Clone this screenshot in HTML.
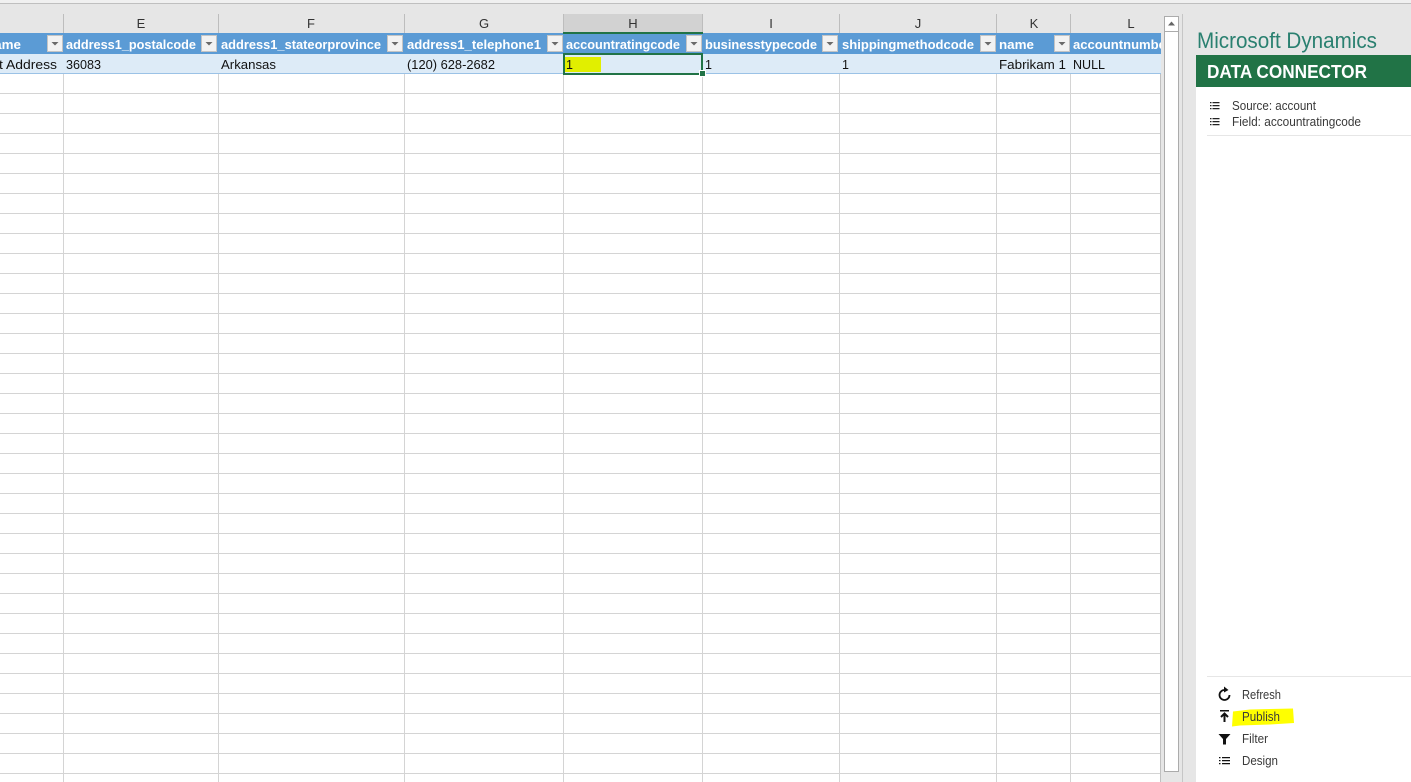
<!DOCTYPE html>
<html><head><meta charset="utf-8"><style>
html,body{margin:0;padding:0;background:#fff;overflow:hidden}
svg{display:block}
text{font-family:"Liberation Sans",sans-serif}
.c{font-size:13px;fill:#333;text-anchor:middle}
.h{font-size:13px;font-weight:bold;fill:#fff}
.d{font-size:12.5px;fill:#111}
.p{font-size:12.5px;fill:#3a3a3a}
</style></head><body>
<svg width="1411" height="782" viewBox="0 0 1411 782" xmlns="http://www.w3.org/2000/svg">
<defs><clipPath id="cl"><rect x="0" y="0" width="1161" height="782"/></clipPath></defs>
<rect width="1411" height="782" fill="#fff"/>
<rect width="1411" height="3" fill="#f0f0f0"/>
<rect y="3" width="1411" height="1" fill="#bfbfbf"/>
<rect y="4" width="1411" height="29" fill="#e6e6e6"/>
<rect x="1161" y="4" width="250" height="51" fill="#e6e6e6"/>
<rect x="1161" y="4" width="35" height="778" fill="#e6e6e6"/>
<rect x="1182" y="14" width="1" height="768" fill="#c6c6c6"/>

<!-- H header -->
<rect x="563" y="14" width="140" height="19" fill="#d2d2d2"/>
<!-- header dividers -->
<g fill="#bdbdbd">
<rect x="63" y="14" width="1" height="19"/><rect x="218" y="14" width="1" height="19"/><rect x="404" y="14" width="1" height="19"/><rect x="563" y="14" width="1" height="19"/><rect x="702" y="14" width="1" height="19"/><rect x="839" y="14" width="1" height="19"/><rect x="996" y="14" width="1" height="19"/><rect x="1070" y="14" width="1" height="19"/>
</g>
<text class="c" x="141" y="28">E</text><text class="c" x="311" y="28" fill="#400">F</text><text class="c" x="484" y="28">G</text><text class="c" x="633" y="28">H</text><text class="c" x="771" y="28">I</text><text class="c" x="918" y="28">J</text><text class="c" x="1034" y="28">K</text><text class="c" x="1131" y="28">L</text>

<!-- grid -->
<g fill="#d4d4d4">
<rect x="63" y="54" width="1" height="728"/><rect x="218" y="54" width="1" height="728"/><rect x="404" y="54" width="1" height="728"/><rect x="563" y="54" width="1" height="728"/><rect x="702" y="54" width="1" height="728"/><rect x="839" y="54" width="1" height="728"/><rect x="996" y="54" width="1" height="728"/><rect x="1070" y="54" width="1" height="728"/>
<rect y="93" width="1161" height="1"/><rect y="113" width="1161" height="1"/><rect y="133" width="1161" height="1"/><rect y="153" width="1161" height="1"/><rect y="173" width="1161" height="1"/><rect y="193" width="1161" height="1"/><rect y="213" width="1161" height="1"/><rect y="233" width="1161" height="1"/><rect y="253" width="1161" height="1"/><rect y="273" width="1161" height="1"/><rect y="293" width="1161" height="1"/><rect y="313" width="1161" height="1"/><rect y="333" width="1161" height="1"/><rect y="353" width="1161" height="1"/><rect y="373" width="1161" height="1"/><rect y="393" width="1161" height="1"/><rect y="413" width="1161" height="1"/><rect y="433" width="1161" height="1"/><rect y="453" width="1161" height="1"/><rect y="473" width="1161" height="1"/><rect y="493" width="1161" height="1"/><rect y="513" width="1161" height="1"/><rect y="533" width="1161" height="1"/><rect y="553" width="1161" height="1"/><rect y="573" width="1161" height="1"/><rect y="593" width="1161" height="1"/><rect y="613" width="1161" height="1"/><rect y="633" width="1161" height="1"/><rect y="653" width="1161" height="1"/><rect y="673" width="1161" height="1"/><rect y="693" width="1161" height="1"/><rect y="713" width="1161" height="1"/><rect y="733" width="1161" height="1"/><rect y="753" width="1161" height="1"/><rect y="773" width="1161" height="1"/>
<rect x="1160" y="74" width="1" height="708" fill="#c0c0c0"/>
</g>

<!-- table header + row -->
<rect y="33" width="1161" height="21" fill="#5b9bd5"/>
<rect y="54" width="1161" height="19" fill="#ddebf7"/>
<rect y="73" width="1161" height="1" fill="#9bc2e6"/>

<!-- highlighted cell fill -->
<rect x="565" y="57" width="36" height="15" fill="#e1ef00"/>

<g clip-path="url(#cl)">
<text class="h" x="-14" y="49" textLength="35" lengthAdjust="spacingAndGlyphs">name</text>
<text class="h" x="66" y="49" textLength="130" lengthAdjust="spacingAndGlyphs">address1_postalcode</text>
<text class="h" x="221" y="49" textLength="160" lengthAdjust="spacingAndGlyphs">address1_stateorprovince</text>
<text class="h" x="407" y="49" textLength="134" lengthAdjust="spacingAndGlyphs">address1_telephone1</text>
<text class="h" x="566" y="49" textLength="114" lengthAdjust="spacingAndGlyphs">accountratingcode</text>
<text class="h" x="705" y="49" textLength="112" lengthAdjust="spacingAndGlyphs">businesstypecode</text>
<text class="h" x="842" y="49" textLength="132" lengthAdjust="spacingAndGlyphs">shippingmethodcode</text>
<text class="h" x="999" y="49" textLength="35" lengthAdjust="spacingAndGlyphs">name</text>
<text class="h" x="1073" y="49" textLength="98" lengthAdjust="spacingAndGlyphs">accountnumber</text>

<text class="d" x="-1" y="69" textLength="58" lengthAdjust="spacingAndGlyphs">t Address</text>
<text class="d" x="66" y="69" textLength="35" lengthAdjust="spacingAndGlyphs">36083</text>
<text class="d" x="221" y="69" textLength="55" lengthAdjust="spacingAndGlyphs">Arkansas</text>
<text class="d" x="407" y="69" textLength="88" lengthAdjust="spacingAndGlyphs">(120) 628-2682</text>
<text class="d" x="566" y="69">1</text>
<text class="d" x="705" y="69">1</text>
<text class="d" x="842" y="69">1</text>
<text class="d" x="999" y="69" textLength="67" lengthAdjust="spacingAndGlyphs">Fabrikam 1</text>
<text class="d" x="1073" y="69" textLength="32" lengthAdjust="spacingAndGlyphs">NULL</text>
</g>

<!-- filter buttons -->
<g fill="#f2f2f2" stroke="#c4c4c4">
<rect x="47.5" y="35.500" width="15" height="16"/><rect x="201.500" y="35.500" width="15" height="16"/><rect x="387.500" y="35.500" width="15" height="16"/><rect x="547.500" y="35.500" width="15" height="16"/><rect x="686.500" y="35.500" width="15" height="16"/><rect x="822.500" y="35.500" width="15" height="16"/><rect x="980.500" y="35.500" width="15" height="16"/><rect x="1054.500" y="35.500" width="15" height="16"/>
</g>
<g fill="#6a6a6a">
<path d="M51.500 42h7l-3.500 3.500z"/><path d="M205.500 42h7l-3.500 3.500z"/><path d="M391.500 42h7l-3.500 3.500z"/><path d="M551.500 42h7l-3.500 3.500z"/><path d="M690.500 42h7l-3.500 3.500z"/><path d="M826.500 42h7l-3.500 3.500z"/><path d="M984.500 42h7l-3.500 3.500z"/><path d="M1058.500 42h7l-3.500 3.500z"/>
</g>

<!-- selection -->
<rect x="563" y="32" width="140" height="2" fill="#217346"/>
<rect x="564" y="54" width="138" height="20" fill="none" stroke="#217346" stroke-width="2"/>
<rect x="699" y="70" width="7" height="7" fill="#fff"/>
<rect x="700" y="71" width="5" height="5" fill="#217346"/>

<!-- scrollbar -->
<rect x="1164.500" y="16.500" width="14" height="755" fill="#fff" stroke="#ababab"/>
<rect x="1164" y="31" width="15" height="1" fill="#ababab"/>
<path d="M1168 25.500h7l-3.500-4z" fill="#666"/>

<!-- pane -->
<rect x="1196" y="55" width="215" height="727" fill="#fff"/>
<text x="1197" y="48" font-size="22" fill="#2a8070" textLength="180" lengthAdjust="spacingAndGlyphs">Microsoft Dynamics</text>
<rect x="1196" y="55" width="215" height="32" fill="#217346"/>
<text x="1207" y="78" font-size="18" font-weight="bold" fill="#fff" textLength="160" lengthAdjust="spacingAndGlyphs">DATA CONNECTOR</text>

<g fill="#222">
<path d="M1210 102h1.500v1.200h-1.500zM1210 105h1.500v1.200h-1.500zM1210 108h1.500v1.200h-1.500zM1212.500 102h7v1.200h-7zM1212.500 105h7v1.200h-7zM1212.500 108h7v1.200h-7z"/>
<path d="M1210 118h1.500v1.200h-1.500zM1210 121h1.500v1.200h-1.500zM1210 124h1.500v1.200h-1.500zM1212.500 118h7v1.200h-7zM1212.500 121h7v1.200h-7zM1212.500 124h7v1.200h-7z"/>
</g>
<text class="p" x="1232" y="110" textLength="84" lengthAdjust="spacingAndGlyphs">Source: account</text>
<text class="p" x="1232" y="126" textLength="129" lengthAdjust="spacingAndGlyphs">Field: accountratingcode</text>
<rect x="1207" y="135" width="204" height="1" fill="#e6e6e6"/>
<rect x="1207" y="676" width="204" height="1" fill="#e6e6e6"/>

<!-- highlighter -->
<path d="M1233 711.500L1250 709.500L1270 709L1293 708.500L1294 723L1270 724.500L1240 725.500L1232 726.500z" fill="#ffff00"/>

<!-- action icons -->
<path d="M1224.500 690A5 5 0 1 0 1229.500 695" fill="none" stroke="#111" stroke-width="1.800"/>
<path d="M1224 686.500l4.500 3.500-4.500 2.500z" fill="#111"/>
<path d="M1220 710h9v1.500h-9z" fill="#111"/>
<path d="M1224.500 722v-8.500M1221 717l3.500-3.500 3.500 3.500" fill="none" stroke="#111" stroke-width="2"/>
<path d="M1218.500 734h12l-4.500 5v5.500h-3V739z" fill="#111"/>
<g fill="#111">
<path d="M1219 757h1.500v1.300H1219zM1219 760h1.500v1.300H1219zM1219 763h1.500v1.300H1219zM1222 757h8v1.300h-8zM1222 760h8v1.300h-8zM1222 763h8v1.300h-8z"/>
</g>
<text class="p" x="1242" y="699" textLength="39" lengthAdjust="spacingAndGlyphs">Refresh</text>
<text class="p" x="1242" y="721" textLength="38" lengthAdjust="spacingAndGlyphs">Publish</text>
<text class="p" x="1242" y="743" textLength="26" lengthAdjust="spacingAndGlyphs">Filter</text>
<text class="p" x="1242" y="765" textLength="36" lengthAdjust="spacingAndGlyphs">Design</text>
</svg>
</body></html>
